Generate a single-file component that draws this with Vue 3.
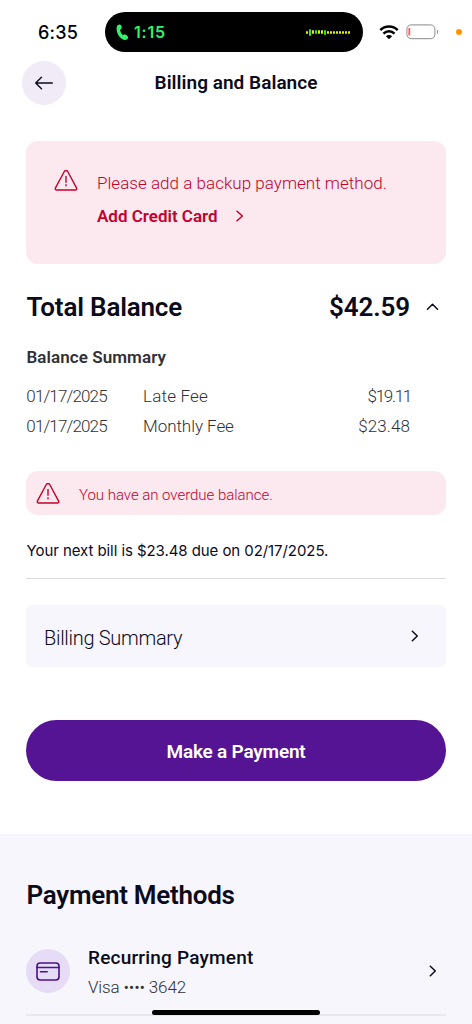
<script setup>
const fees = [
  { date: '01/17/2025', label: 'Late Fee', amount: '$19.11', tight: true },
  { date: '01/17/2025', label: 'Monthly Fee', amount: '$23.48', tight: false },
]
const wave = [3, 7, 4.5, 4, 4, 4, 5, 3, 3, 3, 3, 3, 3, 3, 3]
</script>

<template>
  <div class="screen">
    <header class="status">
      <span class="clock">6:35</span>
      <div class="island">
        <svg class="phone" width="14" height="18" viewBox="0 0 14 18">
          <path d="M3.200.6c1.300-.3 2.400.7 2.500 2.200 0 1.500-.3 2.300-1.600 2.900.2 2 1.100 3.900 2.800 5.300 1.100-.7 2-.8 3.300-.1 1.500.9 2.200 2 1.800 3.200-.6 1.700-2.400 2.400-4.300 1.700C3.400 14 .5 9.300.6 3.900.7 2 1.700.9 3.200.6Z" fill="#32f26b" />
        </svg>
        <span class="call">1:15</span>
        <div class="wave">
          <i v-for="(h, i) in wave" :key="i" :class="{ lime: i === 1 || i === 3 || i === 6 }" :style="{ height: h + 'px' }"></i>
        </div>
      </div>
      <svg class="wifi" width="20" height="15" viewBox="0 0 20 15">
        <path d="M1.300 5.200a12.300 12.300 0 0 1 17.400 0M4.500 8.600a7.800 7.800 0 0 1 11 0" fill="none" stroke="#000" stroke-width="2.500" />
        <path d="M10 14.300 6.900 11.200a4.400 4.400 0 0 1 6.200 0Z" />
      </svg>
      <svg class="battery" width="33" height="16" viewBox="0 0 33 16">
        <rect x=".9" y=".9" width="28" height="13.800" rx="4.200" fill="none" stroke="#8b8b8b" stroke-width="1" />
        <rect x="2.400" y="4" width="1.800" height="7.600" rx=".6" fill="#ff5c5c" />
        <path d="M31 5.700c1.200.4 1.200 3.800 0 4.200Z" fill="#777" />
      </svg>
      <span class="dot"></span>
    </header>

    <nav class="bar">
      <button class="back" aria-label="Back">
        <svg width="20" height="16" viewBox="0 0 20 16"><path d="M18.300 8H2M7.500 2.200 1.700 8l5.800 5.800" /></svg>
      </button>
      <h1>Billing and Balance</h1>
    </nav>

    <main>
      <section class="alert">
        <svg class="warn" width="24" height="22" viewBox="0 0 24 22">
          <path d="M10.300 1.500 1.500 17.800c-.6 1.200-.1 2.200 1.300 2.200h18.400c1.400 0 1.900-1 1.300-2.200l-8.800-16.300c-.9-1.400-2.500-1.400-3.400 0Z" />
          <path d="M12 6.500v5.800M12 14.800v1" />
        </svg>
        <div>
          <p class="msg">Please add a backup payment method.</p>
          <a class="add">Add Credit Card
            <svg width="8" height="12" viewBox="0 0 8 12"><path d="m1 1.200 5.400 4.800L1 10.800" /></svg>
          </a>
        </div>
      </section>

      <section class="total">
        <h2>Total Balance</h2>
        <strong>$42.59</strong>
        <svg width="13" height="8" viewBox="0 0 13 8"><path d="m1.500 6.300 5-5 5 5" /></svg>
      </section>

      <h3>Balance Summary</h3>
      <div v-for="fee in fees" :key="fee.label" class="fee">
        <span class="date">{{ fee.date }}</span>
        <span class="label" :class="{ wide: fee.tight }">{{ fee.label }}</span>
        <span class="amount" :class="{ tight: fee.tight }">{{ fee.amount }}</span>
      </div>

      <div class="overdue">
        <svg class="warn" width="24" height="22" viewBox="0 0 24 22">
          <path d="M10.300 1.500 1.500 17.800c-.6 1.200-.1 2.200 1.300 2.200h18.400c1.400 0 1.900-1 1.300-2.200l-8.800-16.300c-.9-1.400-2.500-1.400-3.400 0Z" />
          <path d="M12 6.500v5.800M12 14.800v1" />
        </svg>
        <span>You have an overdue balance.</span>
      </div>

      <p class="next">Your next bill is $23.48 due on 02/17/2025.</p>

      <div class="summary">
        <span>Billing Summary</span>
        <svg width="8" height="12" viewBox="0 0 8 12"><path d="m1.300 1.200 5 4.800-5 4.800" /></svg>
      </div>

      <button class="pay">Make a Payment</button>
    </main>

    <section class="methods">
      <h2>Payment Methods</h2>
      <div class="method">
        <span class="badge">
          <svg width="24" height="19" viewBox="0 0 24 19"><rect x="1" y="1" width="22" height="17" rx="3.200" /><path d="M1 5.500h22M4.500 9.800h6.700" /></svg>
        </span>
        <div class="info">
          <p class="name">Recurring Payment</p>
          <p class="card">Visa •••• 3642</p>
        </div>
        <svg class="go" width="8" height="12" viewBox="0 0 8 12"><path d="m1.300 1.200 5 4.800-5 4.800" /></svg>
      </div>
    </section>
    <div class="home"></div>
  </div>
</template>

<style>
body { background: #fff; }
</style>

<style scoped>
* { box-sizing: border-box; }
.screen { position: relative; width: 472px; height: 1024px; overflow: hidden; background: #fff; color: #0b0b1c; font-family: Roboto, "Liberation Sans", sans-serif; display: flex; flex-direction: column; }
h1, h2, h3, p { margin: 0; }
button { border: 0; padding: 0; font-family: inherit; }
svg { flex: none; display: block; }
.status { height: 61px; padding: 12px 10px 9px 38px; display: flex; align-items: center; }
.clock { width: 67px; padding-top: 2px; font: 500 18px/40px Inter, sans-serif; letter-spacing: 0.2px; color: #000; }
.island { width: 258px; height: 40px; border-radius: 20px; background: #000; display: flex; align-items: center; padding: 0 13px 0 11px; }
.phone { margin-top: 2px; }
.call { margin-left: 4px; color: #32f26b; font: 600 16px/40px Inter, sans-serif; letter-spacing: 0.8px; }
.wave { margin-left: auto; display: flex; align-items: center; gap: 0.9px; }
.wave i { width: 2.1px; border-radius: 1px; background: #e3ee08; }
.wave i.lime { background: #2bea18; }
.wifi { margin-left: 16px; }
.battery { margin-left: 7px; }
.dot { width: 6px; height: 6px; margin-left: auto; border-radius: 50%; background: #ff9500; }
.bar { height: 44px; padding: 0 22px; display: grid; grid-template-columns: 44px 1fr 44px; grid-template-rows: 44px; align-items: center; }
.back { width: 44px; height: 44px; border-radius: 50%; background: #f0ebf7; display: grid; place-items: center; }
.back path { fill: none; stroke: #0b0b1c; stroke-width: 1.4; stroke-linecap: round; stroke-linejoin: round; }
h1 { font-size: 19px; font-weight: 600; line-height: 44px; letter-spacing: 0.03px; text-align: center; }
main { padding: 36px 26px 0; height: 729px; }
.alert { height: 123px; border-radius: 12px; background: #fbe9ef; color: #c4002b; display: flex; gap: 19px; padding: 26px 28px; }
.warn path { fill: none; stroke: #c4002b; stroke-width: 1.4; stroke-linecap: round; stroke-linejoin: round; }
.alert .warn { margin-top: 3px; }
.msg { font-size: 17px; font-weight: 300; line-height: 33px; letter-spacing: 0.03px; }
.add { display: flex; align-items: center; gap: 18px; font-size: 17px; font-weight: 600; line-height: 33px; }
.add svg { margin-top: -1px; }
.add path { fill: none; stroke: #c4002b; stroke-width: 1.5; stroke-linecap: round; stroke-linejoin: round; }
.total { margin-top: 23px; height: 40px; display: flex; align-items: center; padding-right: 7px; }
h2 { padding-left: 0.5px; font-size: 26px; font-weight: 600; line-height: 40px; letter-spacing: -0.18px; }
.total strong { margin-left: auto; margin-right: 16px; font-size: 26px; font-weight: 600; line-height: 40px; letter-spacing: -0.1px; }
.total path, .summary path, .go path { fill: none; stroke: #0b0b1c; stroke-width: 1.5; stroke-linecap: round; stroke-linejoin: round; }
h3 { margin-top: 19px; padding-left: 0.4px; font-size: 17px; font-weight: 600; line-height: 22px; letter-spacing: 0.08px; color: #303036; margin-bottom: 13px; }
.fee { height: 30px; display: grid; grid-template-columns: 117px 1fr auto; padding-right: 36px; font-size: 17px; font-weight: 300; line-height: 30px; color: #303036; }
.date { letter-spacing: -0.85px; padding-left: 0.3px; }
.label { letter-spacing: -0.05px; }
.label.wide { letter-spacing: 0.2px; }
.amount { letter-spacing: 0.1px; }
.amount.tight { letter-spacing: -1.3px; margin-right: -1px; }
.overdue { margin-top: 30px; height: 44px; border-radius: 12px; background: #fbe9ef; color: #c4002b; display: flex; align-items: center; gap: 19px; padding-left: 10px; font-size: 15px; font-weight: 300; letter-spacing: -0.03px; padding-top: 1px; }
.overdue span { padding-top: 2px; }
.next { height: 64px; padding-left: 0.5px; border-bottom: 1px solid #dcdcde; font: 400 15px/72px Inter, sans-serif; letter-spacing: -0.07px; }
.summary { margin-top: 26px; height: 62px; border-radius: 6px; background: #f7f6fc; display: flex; align-items: center; justify-content: space-between; padding: 0 27px 0 18px; font-size: 20px; font-weight: 300; letter-spacing: -0.3px; }
.summary span { padding-top: 3px; }
.pay { display: block; margin-top: 53px; width: 100%; height: 61px; border-radius: 31px; background: #551493; color: #fff; font-size: 19px; font-weight: 600; line-height: 63px; letter-spacing: -0.2px; }
.methods { flex: 1; background: #f7f6fc; padding: 41px 26px 0; }
.methods h2 { letter-spacing: -0.27px; }
.method { margin-top: 31px; height: 70px; border-bottom: 2px solid #e9e8ee; display: flex; padding-top: 3px; }
.badge { width: 44px; height: 44px; border-radius: 50%; background: #e6dcf6; display: grid; place-items: center; }
.badge rect, .badge path { fill: none; stroke: #4b108f; stroke-width: 1.6; stroke-linecap: round; }
.info { margin-left: 18px; margin-top: -6px; }
.name { font-size: 19px; font-weight: 500; line-height: 30px; letter-spacing: 0.2px; }
.card { font-size: 17px; font-weight: 300; line-height: 28px; letter-spacing: -0.15px; color: #303036; }
.go { margin: 16px 9px 0 auto; }
.home { position: absolute; left: 152px; top: 1010px; width: 168px; height: 5px; border-radius: 3px; background: #000; }
</style>
